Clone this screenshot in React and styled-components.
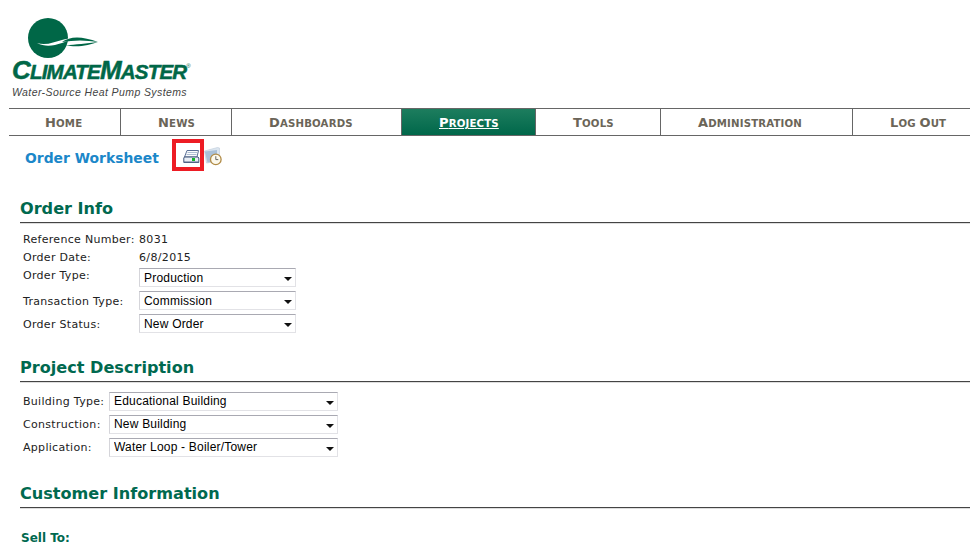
import React from 'react';
import styled, { createGlobalStyle } from 'styled-components';

const GlobalStyle = createGlobalStyle`
  html, body {
    margin: 0;
    padding: 0;
    background: #fff;
    overflow: hidden;
  }
  body {
    font-family: "DejaVu Sans", Verdana, sans-serif;
    font-size: 11px;
    color: #222;
  }
`;

const Page = styled.div`
  width: 970px;
  height: 547px;
  overflow: hidden;
`;

const Header = styled.div`
  height: 108px;
  box-sizing: border-box;
  padding: 18px 0 0 12px;
`;

const LogoMark = styled.svg`
  display: block;
  width: 90px;
  height: 41px;
`;

const Wordmark = styled.div`
  font-family: "Liberation Sans", Arial, sans-serif;
  font-weight: 700;
  font-style: italic;
  font-size: 20.5px;
  line-height: 23px;
  letter-spacing: -0.8px;
  color: #006747;
  text-transform: uppercase;
  -webkit-text-stroke: 0.5px #006747;
  white-space: nowrap;
`;

const BigLetter = styled.span`
  font-size: 26px;
`;

const Reg = styled.sup`
  font-size: 6px;
  font-style: normal;
  font-weight: 400;
  letter-spacing: 0;
  -webkit-text-stroke: 0;
  vertical-align: 11px;
  line-height: 0;
`;

const Tagline = styled.div`
  font-family: "Liberation Sans", Arial, sans-serif;
  font-style: italic;
  font-size: 10.5px;
  line-height: 12px;
  letter-spacing: 0.4px;
  color: #444;
  white-space: nowrap;
  margin-top: 3px;
`;

const Nav = styled.nav`
  display: flex;
  height: 28px;
  box-sizing: border-box;
  margin-left: 9px;
  border-top: 1px solid #666;
  border-bottom: 1px solid #666;
`;

const NavItem = styled.a`
  width: ${p => p.$w}px;
  box-sizing: border-box;
  display: block;
  padding: 1px 0 0 ${p => (p.$first ? 36 : 37)}px;
  line-height: 25px;
  font-size: 10.2px;
  font-weight: 700;
  text-transform: uppercase;
  letter-spacing: 0.15px;
  white-space: nowrap;
  color: ${p => (p.$active ? '#fff' : '#6b6558')};
  text-decoration: ${p => (p.$active ? 'underline' : 'none')};
  background: ${p => (p.$active ? 'linear-gradient(#1d7d5e, #00674a)' : '#fff')};
  border-right: ${p => (p.$last ? '0' : '1px solid #666')};
`;

const NavCap = styled.span`
  font-size: 13px;
`;

const TitleRow = styled.div`
  display: flex;
  align-items: center;
  height: 36px;
  margin-top: 1px;
  padding-left: 25px;
`;

const PageTitle = styled.h1`
  margin: 0;
  padding-top: 6px;
  width: 147px;
  font-size: 13.9px;
  font-weight: 700;
  color: #1b87c9;
  white-space: nowrap;
`;

const PrintBox = styled.div`
  width: 32px;
  height: 32px;
  box-sizing: border-box;
  border: 4px solid #ed1c24;
  padding: 5px 0 0 7px;
`;

const IconSvg = styled.svg`
  display: block;
`;

const ClockWrap = styled.div`
  margin-top: 2px;
`;

const Section = styled.section`
  margin-left: 20px;
  padding-top: ${p => p.$top}px;
`;

const SectionTitle = styled.h2`
  margin: 0;
  height: 27px;
  line-height: 26px;
  box-sizing: border-box;
  font-size: 16.1px;
  font-weight: 700;
  color: #00694f;
  border-bottom: 1px solid #444;
  box-shadow: 0 1px 0 #ddd;
`;

const Form = styled.div`
  display: grid;
  grid-template-columns: ${p => p.$label}px auto;
  justify-content: start;
  padding: ${p => p.$pad}px 0 0 3px;
`;

const Label = styled.div`
  display: flex;
  align-items: center;
  box-sizing: border-box;
  height: ${p => p.$h}px;
  padding-top: ${p => p.$drop || 0}px;
  padding-bottom: ${p => p.$lift || 0}px;
  white-space: nowrap;
  letter-spacing: 0.3px;
  color: #222;
`;

const Value = styled.div`
  display: flex;
  align-items: center;
  height: ${p => p.$h}px;
  letter-spacing: 0.35px;
  color: #222;
`;

const SelectWrap = styled.div`
  position: relative;
  width: ${p => p.$w}px;
  height: 19px;
  box-sizing: border-box;
  border: 1px solid #e2e2e6;
  border-top-color: #a9a9b2;
  border-left-color: #d5d5da;
  background: #fff;

  &::after {
    content: '';
    position: absolute;
    right: 3px;
    top: 8px;
    border-left: 4px solid transparent;
    border-right: 4px solid transparent;
    border-top: 4px solid #111;
  }
`;

const Select = styled.select`
  appearance: none;
  display: block;
  width: 100%;
  height: 100%;
  margin: 0;
  padding: ${p => (p.$low ? '1px 0 0 4px' : '0 0 1px 4px')};
  border: 0;
  outline: 0;
  background: transparent;
  font-family: "Liberation Sans", Arial, sans-serif;
  font-size: 12px;
  letter-spacing: 0.2px;
  color: #000;
`;

const SubTitle = styled.h3`
  margin: 23px 0 0 1px;
  font-size: 12px;
  line-height: 14px;
  font-weight: 700;
  color: #00694f;
`;

const navItems = [
  ['Home', 112],
  ['News', 111],
  ['Dashboards', 170],
  ['Projects', 134, true],
  ['Tools', 125],
  ['Administration', 192],
  ['Log Out', 117],
];

const PrinterIcon = () => (
  <IconSvg width="17" height="16" viewBox="0 0 17 16">
    <path d="M4 2.5h11.5l-1.5 6.5H1.5z" fill="#fbfcfd" stroke="#5b7096" strokeWidth="1" />
    <path d="M4.5 4.5h9.5M3.5 6.5h10" stroke="#aebed2" strokeWidth="1" />
    <path d="M1.5 9h13.5l.8 1v4.5H.8V10z" fill="#e9eef5" stroke="#3f5479" strokeWidth="1" />
    <path d="M1 13.5h14.5v1.2H1z" fill="#56698c" />
    <rect x="9" y="10" width="3" height="3" fill="#12b52a" />
  </IconSvg>
);

const ClockFolderIcon = () => (
  <IconSvg width="18" height="19" viewBox="0 0 18 19">
    <path d="M.5 4l13-3.5 2 .5v13l-13 2z" fill="#dbe5ef" stroke="#c3d0de" strokeWidth="0.7" />
    <path d="M.8 4.5l2.7 11 9.5-1.5V3z" fill="#a9c0d8" />
    <circle cx="11.8" cy="12.4" r="5.3" fill="#fdf9ec" stroke="#b08a45" strokeWidth="1.3" />
    <path d="M11.8 9.2v3.4h2.5" fill="none" stroke="#555" strokeWidth="0.9" />
  </IconSvg>
);

const Row = ({ label, h, drop, lift, children }) => (
  <>
    <Label $h={h} $drop={drop} $lift={lift}>{label}</Label>
    <Value $h={h}>{children}</Value>
  </>
);

const Drop = ({ w, value, low }) => (
  <SelectWrap $w={w}>
    <Select defaultValue={value} $low={low}>
      <option>{value}</option>
    </Select>
  </SelectWrap>
);

const NavLabel = ({ text }) =>
  text.split(' ').map((word, i) => (
    <React.Fragment key={word}>
      {i > 0 && ' '}
      <NavCap>{word[0]}</NavCap>{word.slice(1)}
    </React.Fragment>
  ));

const App = () => (
  <Page>
    <GlobalStyle />
    <Header>
      <LogoMark viewBox="0 0 90 41">
        <circle cx="36" cy="20" r="20" fill="#006747" />
        <path d="M25 25c9 3 17-1 25-3 7-2 11-2 16-1-7 0-10 2-16 4-9 3-17 4-25 0z" fill="#fff" />
        <path d="M50 24c8-6 20-6 36 0-12-2-24-2-36 0z" fill="#006747" />
        <path d="M54 27c9 0 21-2 32-3-8 3-22 6-32 3z" fill="#006747" />
      </LogoMark>
      <Wordmark>
        <BigLetter>C</BigLetter>limate<BigLetter>M</BigLetter>aster<Reg>®</Reg>
      </Wordmark>
      <Tagline>Water-Source Heat Pump Systems</Tagline>
    </Header>
    <Nav>
      {navItems.map(([text, w, active], i) => (
        <NavItem key={text} $w={w} $active={active} $first={i === 0} $last={i === navItems.length - 1}>
          <NavLabel text={text} />
        </NavItem>
      ))}
    </Nav>
    <TitleRow>
      <PageTitle>Order Worksheet</PageTitle>
      <PrintBox><PrinterIcon /></PrintBox>
      <ClockWrap><ClockFolderIcon /></ClockWrap>
    </TitleRow>
    <Section $top={23}>
      <SectionTitle>Order Info</SectionTitle>
      <Form $label={116} $pad={7}>
        <Row label="Reference Number:" h={18}>8031</Row>
        <Row label="Order Date:" h={18}>6/8/2015</Row>
        <Row label="Order Type:" h={23} lift={4}><Drop w={157} value="Production" low /></Row>
        <Row label="Transaction Type:" h={23} drop={2}><Drop w={157} value="Commission" low /></Row>
        <Row label="Order Status:" h={23} drop={2}><Drop w={157} value="New Order" low /></Row>
      </Form>
    </Section>
    <Section $top={20}>
      <SectionTitle>Project Description</SectionTitle>
      <Form $label={86} $pad={8}>
        <Row label="Building Type:" h={23}><Drop w={229} value="Educational Building" /></Row>
        <Row label="Construction:" h={23}><Drop w={229} value="New Building" /></Row>
        <Row label="Application:" h={23}><Drop w={229} value="Water Loop - Boiler/Tower" /></Row>
      </Form>
    </Section>
    <Section $top={22}>
      <SectionTitle>Customer Information</SectionTitle>
      <SubTitle>Sell To:</SubTitle>
    </Section>
  </Page>
);

export default App;
